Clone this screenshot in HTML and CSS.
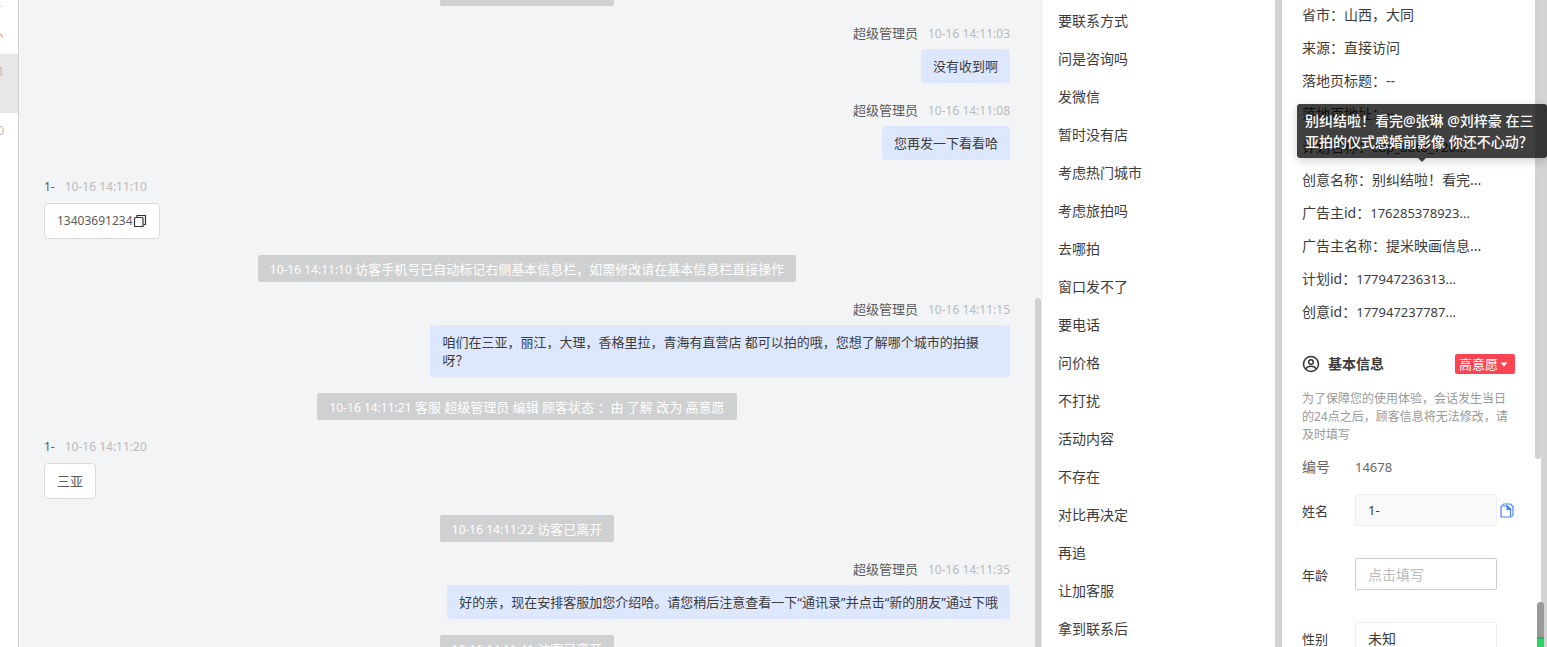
FILE: index.html
```html
<!DOCTYPE html>
<html lang="zh-CN">
<head>
<meta charset="utf-8">
<title>客服会话</title>
<link rel="stylesheet" href="styles.css">
</head>
<body>
<div class="app">
  <aside class="sessions">
    <div class="sessions-top">
      <svg class="sessions-mark" width="4" height="54" viewBox="0 0 4 54" fill="none"><path d="M0 6.500H2" stroke="#ddd"/><path d="M0 34L3 37" stroke="#e3a294" stroke-width="1.300"/></svg>
    </div>
    <div class="session active"><span class="num">1</span></div>
    <div class="session"><span class="num">0</span></div>
  </aside>

  <main class="chat">
    <div class="stream">
      <div class="notice"><span class="num">10-16 14:11:01</span> 访客已离开</div>
      <div class="message mine">
        <div class="meta"><span>超级管理员</span><time class="num">10-16 14:11:03</time></div>
        <div class="bubble">没有收到啊</div>
      </div>
      <div class="message mine">
        <div class="meta"><span>超级管理员</span><time class="num">10-16 14:11:08</time></div>
        <div class="bubble">您再发一下看看哈</div>
      </div>
      <div class="message">
        <div class="meta"><span class="num">1-</span><time class="num">10-16 14:11:10</time></div>
        <div class="bubble"><span class="phone">13403691234</span><button class="icon-button" type="button" aria-label="复制"><svg width="14" height="14" viewBox="0 0 14 14" fill="none" stroke="#333" stroke-width="1.200"><path d="M1.500 4.500Q1.500 3.500 2.500 3.500H9Q10 3.500 10 4.500V12.500H2.500Q1.500 12.500 1.500 11.500Z"/><path d="M4 3V1.500H12.500V10.500H10.500"/></svg></button></div>
      </div>
      <div class="notice"><span class="num">10-16 14:11:10</span> 访客手机号已自动标记右侧基本信息栏，如需修改请在基本信息栏直接操作</div>
      <div class="message mine">
        <div class="meta"><span>超级管理员</span><time class="num">10-16 14:11:15</time></div>
        <div class="bubble">咱们在三亚，丽江，大理，香格里拉，青海有直营店 都可以拍的哦，您想了解哪个城市的拍摄呀？</div>
      </div>
      <div class="notice"><span class="num">10-16 14:11:21</span> 客服 超级管理员 编辑 顾客状态 ：由 了解 改为 高意愿</div>
      <div class="message">
        <div class="meta"><span class="num">1-</span><time class="num">10-16 14:11:20</time></div>
        <div class="bubble">三亚</div>
      </div>
      <div class="notice"><span class="num">10-16 14:11:22</span> 访客已离开</div>
      <div class="message mine">
        <div class="meta"><span>超级管理员</span><time class="num">10-16 14:11:35</time></div>
        <div class="bubble">好的亲，现在安排客服加您介绍哈。请您稍后注意查看一下“通讯录”并点击“新的朋友”通过下哦</div>
      </div>
      <div class="notice"><span class="num">10-16 14:11:41</span> 访客已离开</div>
    </div>
    <div class="chat-thumb"></div>
  </main>

  <ul class="phrases">
    <li>要联系方式</li><li>问是咨询吗</li><li>发微信</li><li>暂时没有店</li><li>考虑热门城市</li><li>考虑旅拍吗</li><li>去哪拍</li><li>窗口发不了</li><li>要电话</li><li>问价格</li><li>不打扰</li><li>活动内容</li><li>不存在</li><li>对比再决定</li><li>再追</li><li>让加客服</li><li>拿到联系后</li>
  </ul>
  <div class="gutter"></div>

  <aside class="details">
    <div class="source">
      <p>省市：山西，大同</p>
      <p>来源：直接访问</p>
      <p>落地页标题：--</p>
      <p>落地页地址：--</p>
      <p>计划名称：<span class="id">cdp_auto_720...</span></p>
      <p class="hovered">创意名称：别纠结啦！看完...<span class="tooltip" role="tooltip">别纠结啦！看完@张琳 @刘梓豪 在三亚拍的仪式感婚前影像 你还不心动？</span></p>
      <p>广告主id：<span class="id">176285378923...</span></p>
      <p>广告主名称：提米映画信息...</p>
      <p>计划id：<span class="id">177947236313...</span></p>
      <p>创意id：<span class="id">177947237787...</span></p>
    </div>
    <header class="section-head">
      <svg width="18" height="18" viewBox="0 0 18 18" fill="none" stroke="#333" stroke-width="1.500"><circle cx="9" cy="9" r="7.500"/><circle cx="9" cy="7" r="2.300"/><path d="M4 14Q5 11.300 9 11.300T14 14"/></svg>
      <h2>基本信息</h2>
      <button class="intent" type="button">高意愿<svg width="8" height="5" viewBox="0 0 8 5"><path d="M0.500 0.500H7.500L4 4.500Z" fill="#fff"/></svg></button>
    </header>
    <p class="hint">为了保障您的使用体验，会话发生当日的24点之后，顾客信息将无法修改，请及时填写</p>
    <div class="serial"><span>编号</span><span class="id">14678</span></div>
    <form class="fields">
      <div class="field">
        <label for="name">姓名</label>
        <input class="readonly" id="name" type="text" value="1-" readonly>
        <button class="icon-button" type="button" aria-label="复制姓名"><svg width="14" height="15" viewBox="0 0 14 15" fill="none" stroke="#4c84f5" stroke-width="1.200"><path d="M3 2.500V2Q3 1 4 1H10.500L13 3.500V12Q13 13 12 13H11"/><path d="M1 3H7.500L10.500 6V14H1Z"/><path d="M7 3V6.500H10.500Z" fill="#4c84f5"/></svg></button>
      </div>
      <div class="field">
        <label for="age">年龄</label>
        <input id="age" type="text" placeholder="点击填写">
      </div>
      <div class="field">
        <label for="gender">性别</label>
        <select id="gender"><option>未知</option></select>
      </div>
    </form>
  </aside>

  <div class="rails">
    <div class="inner-rail"><div class="inner-thumb"></div></div>
    <div class="outer-rail"></div>
    <div class="float-thumb"></div>
  </div>
</div>
</body>
</html>
```
FILE: styles.css
```css
* { box-sizing: border-box; }
body, p, h2, ul { margin: 0; padding: 0; }
body {
  font-family: "Noto Sans", "Noto Sans CJK SC", sans-serif;
  font-size: 14px;
  color: #3c3c3c;
  background: #fff;
}
button, input, select { font: inherit; color: inherit; margin: 0; }
.app { display: flex; height: 100vh; overflow: hidden; }
.num { font-size: 12px; }
.id { font-size: 13px; }
.icon-button { display: flex; padding: 0; border: 0; background: none; }

.sessions { flex: none; width: 19px; border-right: 1px solid #cfd1d4; }
.sessions-top { height: 54px; }
.sessions-mark { display: block; }
.session {
  display: flex;
  justify-content: flex-end;
  height: 59px;
  padding: 9px 14px 0 0;
  line-height: 18px;
  color: #bbb;
  overflow: hidden;
}
.session.active { background: #e7e7e7; }

.chat {
  position: relative;
  flex: 1;
  min-width: 0;
  padding: 0 31px 0 25px;
  background: #f2f4f6;
  font-size: 13px;
  overflow: hidden;
}
.stream { display: flex; flex-direction: column; gap: 16px; margin-top: -21px; }
.notice {
  align-self: center;
  padding: 0 12px;
  line-height: 28px;
  height: 27px;
  border-radius: 2px;
  background: #cfd0d1;
  color: #fff;
}
.message { display: flex; flex-direction: column; align-items: flex-start; gap: 5px; }
.mine { align-items: flex-end; }
.meta { display: flex; align-items: baseline; gap: 10px; line-height: 22px; height: 22px; color: #5c5c5c; }
.meta time { color: #bbb; }
.bubble {
  display: flex;
  align-items: center;
  max-width: 60%;
  padding: 8px 12px;
  line-height: 18px;
  border: 1px solid #d8dade;
  border-radius: 4px;
  background: #fff;
  color: #5c5c5c;
}
.mine .bubble { border: 0; border-radius: 3px; background: #dde8ff; color: #3c3c3c; }
.phone { font-size: 12px; }
.chat-thumb {
  position: absolute;
  right: 0;
  top: 46%;
  bottom: 0;
  width: 6px;
  border-radius: 3px 3px 0 0;
  background: #cfd0d1;
}

.phrases {
  flex: none;
  width: 234px;
  padding: 2px 0 0 16px;
  border-left: 1px solid #ebebeb;
  list-style: none;
  line-height: 38px;
}
.gutter { flex: none; width: 7px; background: #d2d2d2; }

.details { flex: none; width: 253px; padding: 0 20px; }
.source { margin-top: -2px; line-height: 33px; white-space: nowrap; }
.source p { height: 33px; }
.hovered { position: relative; }
.tooltip {
  position: absolute;
  z-index: 2;
  left: -5px;
  bottom: calc(100% + 5px);
  width: 250px;
  padding: 6px 8px;
  border-radius: 3px;
  background: rgba(0, 0, 0, 0.75);
  box-shadow: 0 3px 10px rgba(0, 0, 0, 0.18);
  color: #fff;
  font-weight: 500;
  line-height: 21px;
  white-space: normal;
}
.tooltip::after {
  content: "";
  position: absolute;
  top: 100%;
  left: 50%;
  margin-left: -4px;
  border: 4px solid transparent;
  border-top-color: rgba(0, 0, 0, 0.75);
  border-bottom: 0;
}
.section-head { display: flex; align-items: center; gap: 8px; margin-top: 26px; height: 20px; }
.section-head h2 { font-size: 14px; line-height: 20px; font-weight: 700; }
.intent {
  display: flex;
  align-items: center;
  gap: 2px;
  height: 20px;
  margin-left: auto;
  padding: 0 7px 0 4px;
  border: 0;
  border-radius: 2px;
  background: #fd4453;
  color: #fff;
  font-size: 13px;
  line-height: 20px;
}
.hint { margin-top: 16px; font-size: 12px; line-height: 18px; color: #999; }
.serial { display: flex; margin-top: 13px; line-height: 20px; color: #666; }
.serial span:first-child { width: 53px; }
.fields { display: grid; gap: 32px; margin-top: 17px; }
.field { display: flex; align-items: center; }
.field label { flex: none; width: 53px; font-size: 13px; }
.field input, .field select {
  width: 142px;
  height: 32px;
  padding: 0 12px;
  border: 1px solid #ccc;
  border-radius: 2px;
  background: #fff;
  font-size: 14px;
  outline: 0;
  appearance: none;
}
.field .readonly { border-color: #f0f0f0; background: #f9f9f9; font-size: 13px; }
.field select { border-color: #eee; }
.field input::placeholder { color: #bbb; }
.field .icon-button { margin-left: 3px; }

.rails { position: relative; flex: none; display: flex; width: 12px; }
.inner-rail { width: 6px; }
.inner-thumb { height: 71%; border-radius: 0 0 3px 3px; background: #d2d2d2; }
.outer-rail { width: 6px; background: #d4d4d4; }
.float-thumb {
  position: absolute;
  left: 2px;
  bottom: 0;
  width: 7px;
  height: 45px;
  border-radius: 4px 4px 0 0;
  background: linear-gradient(#999 0 35px, #28b95a 35px 37px, #2bd568 37px);
}
```
